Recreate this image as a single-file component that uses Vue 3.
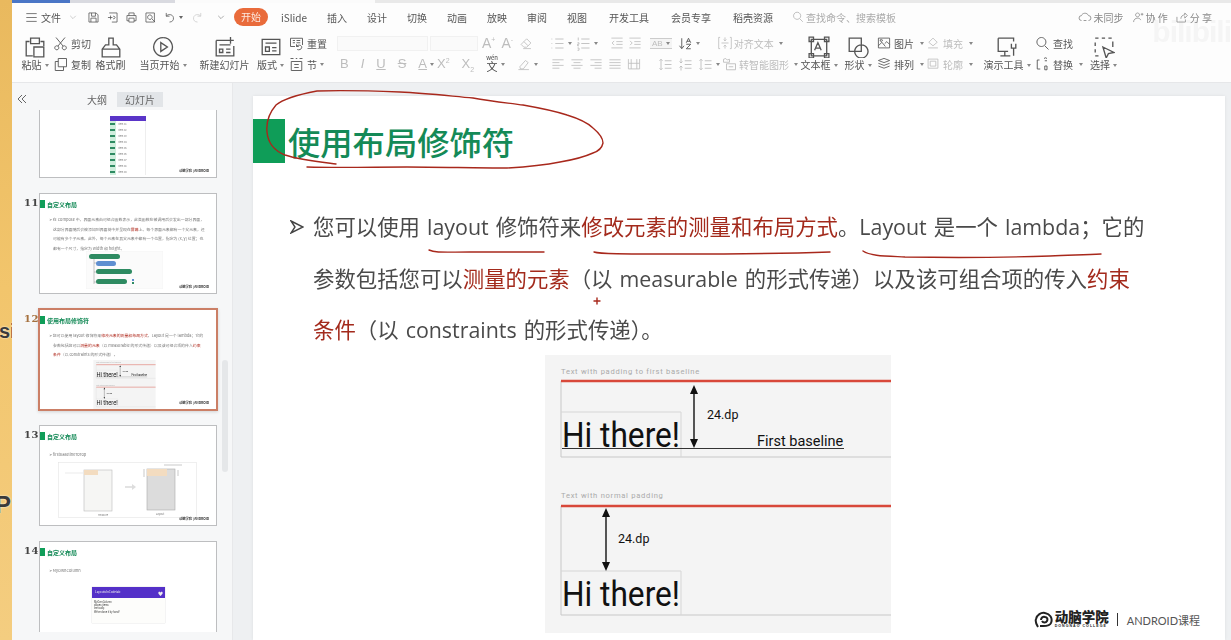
<template>
  <div class="page">
    <div class="strip">
      <span class="strip-si">si</span>
      <span class="strip-p">P</span>
    </div>

    <div class="main">
      <div class="topline">
        <i class="t-blue"></i><i class="t-gray"></i><i class="t-white"></i><i class="t-rest"></i>
      </div>

      <header class="toolbar">
        <div class="menu">
          <Ic n="menu" :s="13" class="m-burger" />
          <span class="m-file">文件</span>
          <Ic n="chev" :s="8" class="m-chev" />
          <div class="quick">
            <Ic n="save" />
            <Ic n="saveas" />
            <Ic n="print" />
            <Ic n="preview" />
            <Ic n="undo" />
            <i class="caret"></i>
            <Ic n="redo" class="off" />
            <Ic n="chev" :s="8" class="q-more" />
          </div>
          <nav class="tabs">
            <span class="pill">开始</span>
            <span v-for="t in tabs" :key="t" :class="{ wide: t.length === 4 }">{{ t }}</span>
          </nav>
          <div class="search">
            <Ic n="search" :s="12" />
            <span>查找命令、搜索模板</span>
          </div>
          <div class="m-right">
            <span class="act"><Ic n="cloud" :s="14" />未同步</span>
            <span class="act"><Ic n="user" :s="13" />协 作</span>
            <span class="act"><Ic n="share" :s="13" />分 享</span>
            <span class="bili">bilibili</span>
          </div>
        </div>

        <div class="ribbon">
          <div class="big w-paste"><Ic n="paste" :s="22" /><span class="lbl caret-r">粘贴</span></div>
          <div class="col w-cut">
            <span class="it"><Ic n="cut" :s="15" />剪切</span>
            <span class="it"><Ic n="copy" :s="15" />复制</span>
          </div>
          <div class="big w-brush"><Ic n="brush" :s="22" /><span class="lbl">格式刷</span></div>
          <div class="big w-play"><Ic n="play" :s="22" /><span class="lbl caret-r">当页开始</span></div>
          <div class="big w-new"><Ic n="newslide" :s="22" /><span class="lbl">新建幻灯片</span></div>
          <div class="big w-layout"><Ic n="layout" :s="22" /><span class="lbl caret-r">版式</span></div>
          <div class="col w-reset">
            <span class="it"><Ic n="reset" :s="15" />重置</span>
            <span class="it"><Ic n="section" :s="15" /><span class="caret-r">节</span></span>
          </div>

          <div class="col w-font off">
            <div class="it fontboxes"><i class="fbox f1"></i><i class="fbox f2"></i>
              <span class="sym s-ap">A<sup>+</sup></span><span class="sym s-am">A<sup>-</sup></span>
              <Ic n="eraser" :s="14" class="s-er" />
            </div>
            <div class="it fontstyle">
              <b class="sym">B</b><em class="sym">I</em><u class="sym">U</u><s class="sym">S</s>
              <u class="sym caret-r">A</u>
              <span class="sym s-x">X<sup>2</sup></span><span class="sym">X<sub>2</sub></span>
              <span class="wen caret-r"><ruby>文<rt>wén</rt></ruby></span>
              <span class="caret-r"><Ic n="marker" :s="14" /></span>
            </div>
          </div>

          <div class="col w-para off">
            <div class="it para">
              <span class="caret-r"><Ic n="bullets" :s="15" /></span>
              <span class="caret-r"><Ic n="numbers" :s="15" /></span>
              <Ic n="outdent" :s="14" class="p-ind" />
              <Ic n="indent" :s="14" />
              <span class="ab caret-r">AB</span>
              <span class="caret-r sortdark"><Ic n="sort" :s="15" /></span>
              <span class="p-txt caret-r"><Ic n="valign" :s="14" />对齐文本</span>
            </div>
            <div class="it para para2">
              <Ic n="left" :s="14" />
              <Ic n="center" :s="14" />
              <Ic n="right" :s="14" />
              <Ic n="justify" :s="14" />
              <Ic n="dist" :s="14" />
              <Ic n="lspace" :s="15" class="p-ls" />
              <Ic n="lspace2" :s="15" />
              <span class="caret-r"><Ic n="lspace" :s="15" /></span>
              <span class="p-txt2 caret-r"><Ic n="smart" :s="15" />转智能图形</span>
            </div>
          </div>

          <div class="big w-box"><Ic n="textbox" :s="22" /><span class="lbl caret-r">文本框</span></div>
          <div class="big w-shape"><Ic n="shape" :s="22" /><span class="lbl caret-r">形状</span></div>
          <div class="col w-pic">
            <span class="it caret-r"><Ic n="image" :s="14" />图片</span>
            <span class="it caret-r"><Ic n="layers" :s="14" />排列</span>
          </div>
          <div class="col w-fill off">
            <span class="it caret-r"><Ic n="fill" :s="14" />填充</span>
            <span class="it caret-r"><Ic n="outline" :s="14" />轮廓</span>
          </div>
          <div class="big w-tool"><Ic n="tool" :s="22" /><span class="lbl caret-r">演示工具</span></div>
          <div class="col w-find">
            <span class="it"><Ic n="search" :s="15" />查找</span>
            <span class="it caret-r"><Ic n="replace" :s="15" />替换</span>
          </div>
          <div class="big w-sel"><Ic n="select" :s="22" /><span class="lbl caret-r">选择</span></div>
        </div>
      </header>

      <div class="work">
        <aside class="panel">
          <div class="ptabs">
            <svg class="collapse" viewBox="0 0 10 10" width="10" height="10"><path d="M5 1L1 5l4 4M9 1L5 5l4 4" /></svg>
            <span class="ptab">大纲</span>
            <span class="ptab on">幻灯片</span>
          </div>
          <div class="thumbs">
            <div class="th-row first">
              <span class="num"></span>
              <div class="th">
                <div class="mini-list">
                  <div class="ml-head"></div>
                  <div v-for="n in 9" :key="n" class="ml-row"><i></i>Item {{ n + 90 }}</div>
                </div>
                <div class="th-logo">动脑学院 | ANDROID</div>
              </div>
            </div>

            <div class="th-row">
              <span class="num">11</span>
              <div class="th">
                <div class="th-title"><i></i>自定义布局</div>
                <p class="th-text">➢ 在 Compose 中，界面元素由可组合函数表示，此类函数在被调用后会发出一部分界面，</p>
                <p class="th-text in">这部分界面随后会被添加到界面树中并呈现在<span class="red">屏幕</span>上。每个界面元素都有一个父元素，还</p>
                <p class="th-text in">可能有多个子元素。此外，每个元素在其父元素中都有一个位置，指定为 (x, y) 位置；也</p>
                <p class="th-text in">都有一个尺寸，指定为 width 和 height。</p>
                <svg class="tree" viewBox="0 0 77 38">
                  <rect x="0" y="0" width="77" height="38" fill="#fbfbfb" stroke="#eee" stroke-width=".5" />
                  <path d="M8 7v26M8 12h4M8 21h4M8 31h4" stroke="#888" stroke-width=".5" fill="none" />
                  <rect x="3" y="3" width="31" height="5" rx="2.5" fill="#2e8b62" />
                  <rect x="10" y="10" width="20" height="5" rx="2.5" fill="#5f8fd0" />
                  <rect x="10" y="18" width="36" height="5" rx="2.5" fill="#2e8b62" />
                  <rect x="10" y="28" width="31" height="5" rx="2.5" fill="#2e8b62" />
                  <rect x="46" y="28" width="2" height="2" fill="#5f8fd0" />
                  <rect x="46" y="31" width="2" height="2" fill="#2e8b62" />
                </svg>
                <div class="th-logo">动脑学院 | ANDROID</div>
              </div>
            </div>

            <div class="th-row cur">
              <span class="num">12</span>
              <div class="th">
                <div class="th-title"><i></i>使用布局修饰符</div>
                <p class="th-text">➢ 您可以使用 layout 修饰符来<span class="red">修改元素的测量和布局方式</span>。Layout 是一个 lambda；它的</p>
                <p class="th-text in">参数包括您可以<span class="red">测量的元素</span>（以 measurable 的形式传递）以及该可组合项的传入<span class="red">约束</span></p>
                <p class="th-text in"><span class="red">条件</span>（以 constraints 的形式传递）。</p>
                <svg class="th-hi" width="63" height="50"><use href="#hi-diagram" /></svg>
                <div class="th-logo">动脑学院 | ANDROID</div>
              </div>
            </div>

            <div class="th-row">
              <span class="num">13</span>
              <div class="th">
                <div class="th-title"><i></i>自定义布局</div>
                <p class="th-text tall">➢ firstBaselineToTop</p>
                <svg class="phones" viewBox="0 0 139 56">
                  <rect x=".5" y=".5" width="138" height="55" fill="#fff" stroke="#e4e4e4" stroke-width=".6" />
                  <rect x="26" y="8" width="28" height="41" fill="#f6f6f4" stroke="#bbb" stroke-width=".6" />
                  <rect x="26" y="8" width="14" height="5" fill="#f3dcc0" />
                  <path d="M7 11h18" stroke="#ccc" stroke-width=".4" />
                  <path d="M67 25h9" stroke="#ddd" stroke-width="1.6" />
                  <path d="M74 22l4 3-4 3z" fill="#ddd" />
                  <rect x="89" y="7" width="28" height="41" fill="#dcdcdc" stroke="#aaa" stroke-width=".6" />
                  <rect x="89" y="7" width="20" height="7" fill="#f3dcc0" />
                  <path d="M86 7v8M106 3h18M120 8v6" stroke="#777" stroke-width=".4" />
                  <text x="45" y="54" class="t4">Measure</text>
                  <text x="102" y="53" class="t4">Layout</text>
                </svg>
                <div class="th-logo">动脑学院 | ANDROID</div>
              </div>
            </div>

            <div class="th-row">
              <span class="num">14</span>
              <div class="th">
                <div class="th-title"><i></i>自定义布局</div>
                <p class="th-text tall">➢ MyOwnColumn</p>
                <div class="card">
                  <div class="card-head">LayoutsInCodelab<i>♥</i></div>
                  <div class="card-body">MyOwnColumn<br />places items<br />vertically.<br />We've done it by hand!</div>
                </div>
              </div>
            </div>
          </div>
          <div class="scroll"></div>
        </aside>

        <section class="stage">
          <div class="slide">
            <div class="title"><i class="mark"></i><h1>使用布局修饰符</h1></div>
            <div class="body">
              <svg class="bullet" viewBox="0 0 14 14" width="14" height="14"><path d="M1 1l12 6-12 6 4-6z" /></svg>
              <p>您可以使用 layout 修饰符来<span class="red">修改元素的测量和布局方式</span>。Layout 是一个 lambda；它的</p>
              <p>参数包括您可以<span class="red">测量的元素</span>（以 measurable 的形式传递）以及该可组合项的传入<span class="red">约束</span></p>
              <p><span class="red">条件</span>（以 constraints 的形式传递）。</p>
            </div>
            <div class="lower">
              <svg width="346" height="278" class="hi">
                <symbol id="hi-diagram" viewBox="0 0 346 278">
                  <rect width="346" height="278" fill="#f4f4f4" />
                  <text x="16" y="19" font-family="Roboto, sans-serif" font-size="7.6" letter-spacing=".72" fill="#aaa">Text with padding to first baseline</text>
                  <path d="M16 102V26M16 102H346" fill="none" stroke="#c8c8c8" stroke-width="1" />
                  <path d="M16 57H136V102" fill="none" stroke="#d6d6d6" stroke-width="1" />
                  <path d="M16 26H346" stroke="#d8483a" stroke-width="2.4" />
                  <text x="17" y="92" font-family="Roboto, sans-serif" font-size="35.5" fill="#111" textLength="118" lengthAdjust="spacingAndGlyphs">Hi there!</text>
                  <path d="M17 93.5H299" stroke="#333" stroke-width="1" />
                  <path d="M149 34V90" stroke="#111" stroke-width="1.4" />
                  <path d="M149 30l-4 9h8zM149 93l-4-9h8z" fill="#111" />
                  <text x="162" y="64" font-family="Roboto, sans-serif" font-size="12.5" fill="#111">24.dp</text>
                  <text x="212" y="91" font-family="Roboto, sans-serif" font-size="14.5" fill="#111">First baseline</text>
                  <text x="16" y="143" font-family="Roboto, sans-serif" font-size="7.6" letter-spacing=".72" fill="#aaa">Text with normal padding</text>
                  <path d="M16 260V151M16 260H346" fill="none" stroke="#c8c8c8" stroke-width="1" />
                  <path d="M16 216H136V260" fill="none" stroke="#d6d6d6" stroke-width="1" />
                  <path d="M16 151H346" stroke="#d8483a" stroke-width="2.4" />
                  <text x="17" y="251" font-family="Roboto, sans-serif" font-size="35.5" fill="#111" textLength="118" lengthAdjust="spacingAndGlyphs">Hi there!</text>
                  <path d="M61 158V213" stroke="#111" stroke-width="1.4" />
                  <path d="M61 153l-4 9h8zM61 216l-4-9h8z" fill="#111" />
                  <text x="73" y="188" font-family="Roboto, sans-serif" font-size="12.5" fill="#111">24.dp</text>
                </symbol>
                <use href="#hi-diagram" />
              </svg>
              <div class="logo">
                <svg viewBox="0 0 20 20" width="20" height="20" class="logo-mark"><path d="M4 17c-2-3-3-5-2-8 1-4 5-7 9-6 5 1 8 5 6 10-1 3-5 3-8 3H6M7 10c0-2 2-4 4-3 2 0 3 2 2 4s-4 2-5 0" /></svg>
                <div class="logo-name"><b>动脑学院</b><small>DONGNAO COLLEGE</small></div>
                <i class="logo-bar"></i>
                <span class="logo-course">ANDROID课程</span>
              </div>
            </div>

            <!-- pen marks drawn over the slide, page coordinates -->
            <svg class="ink" viewBox="253 96 972 544">
              <path d="M336 164C320 162 300 160 285 155C275 151 268 143 267 132C266 122 270 112 276 105C283 99 296 95 317 91C345 90 375 91 400 92C425 93 450 96 473 98C490 101 507 103 523 105C540 108 555 111 567 115C580 119 588 123 593 128C599 133 603 138 603 143C602 148 599 151 593 153C582 158 572 160 560 162C545 165 525 167 507 168C475 168 440 167 407 167C375 167 340 168 307 167" />
              <path d="M429 250C435 253 445 252 470 252L544 252" />
              <path d="M594 252C600 254 620 254 680 254C740 254 800 253 830 252" />
              <path d="M863 251C870 256 885 256 905 257C960 258 1020 257 1050 256C1070 255 1085 255 1101 254" />
              <path d="M594 301h6M597 298v6" />
            </svg>
          </div>
        </section>
      </div>
    </div>
  </div>
</template>

<script setup>
import { h } from 'vue'

const tabs = ['iSlide', '插入', '设计', '切换', '动画', '放映', '审阅', '视图', '开发工具', '会员专享', '稻壳资源']

const icons = {
  menu: 'M2 4h16M2 10h16M2 16h16',
  chev: 'M3 7l7 7 7-7',
  save: 'M3 3h11l3 3v11H3zM7 3v5h6V3M6 17v-6h8v6',
  saveas: 'M5 3h12v14H9M3 10h7M7 7v6M11 8c2 0 3 1 3 2s-1 2-3 2',
  print: 'M6 7V3h8v4M3 7h14v8h-3M6 15H3V7M6 11h8v6H6z',
  preview: 'M3 3h13v14H3zM9 6a3.5 3.5 0 1 0 .1 0M12 12l5 5',
  undo: 'M5 3v5h5M5 8c3-4 10-3 11 2 1 4-2 7-6 7',
  redo: 'M15 3v5h-5M15 8c-3-4-10-3-11 2-1 4 2 7 6 7',
  search: 'M8.5 2a6 6 0 1 0 .1 0M13 13l5 5',
  cloud: 'M5 15a3.5 3.5 0 0 1 0-7c1-4 8-5 10 0a3.5 3.5 0 0 1 0 7M8 15h4',
  user: 'M10 3a3 3 0 1 0 .1 0M4 17c0-4 3-6 6-6s4 1 5 3M15 5h4M17 3v4',
  share: 'M3 9v8h13v-4M9 12c0-4 3-6 6-6V3l4 4-4 4V8',
  paste: 'M5 5H2v13h6M15 5h3v4M6 2h8v5H6zM9 10h9v9H9z',
  cut: 'M5 13a2.7 2.7 0 1 0 .1 0M15 13a2.7 2.7 0 1 0 .1 0M6.5 13.5L16 2M13.5 13.5L4 2',
  copy: 'M7 2h11v11H7zM7 6H3v12h11v-5',
  brush: 'M8 2h4v6h3l3 4v7H2v-7l3-4h3zM2 12h16',
  play: 'M10 1.5a8.5 8.5 0 1 0 .1 0M8 6l6 4-6 4z',
  newslide: 'M2 4h11M2 4v14h16V9M15 1v6M12 4h6M5 8h10M5 12h3v3H5zM11 12h4M11 15h4',
  layout: 'M2 3h16v14H2zM5 6.5h10M5 10h3.5v4H5zM11 10.5h4M11 13.5h4',
  reset: 'M2 3h16v9M2 3v11h6M5 6h3M10 6h5M5 9h3M10 9h5M10 14c2-3 7-2 7 1s-4 4-6 3M10 11v3h3',
  section: 'M2 2h4M9 2h2M14 2h4M3 6h14v12H3zM7 10h6M7 14h6',
  eraser: 'M3 12l8-8 6 6-6 6H7zM7 8l6 6M6 18h11',
  marker: 'M4 14l8-9 4 3-7 9H5zM2 18h15',
  bullets: 'M2 4h1M2 10h1M2 16h1M7 4h11M7 10h11M7 16h11',
  numbers: 'M3 2v4M2 9h2v2H2v2h2M2 16h2v3H2M7 4h11M7 10h11M7 16h11',
  outdent: 'M2 3h16M9 8h9M9 12h9M2 17h16M6 7l-3 3 3 3',
  indent: 'M2 3h16M9 8h9M9 12h9M2 17h16M3 7l3 3-3 3',
  sort: 'M5 3v13M2 13l3 4 3-4M11 9l3-6 3 6M12 7h4M11 11h6l-6 6h6',
  valign: 'M3 2H1v16h2M17 2h2v16h-2M5 10h10M10 2v5M8 5l2 2 2-2M10 18v-5M8 15l2-2 2 2',
  left: 'M2 4h16M2 8h10M2 12h16M2 16h10',
  center: 'M2 4h16M5 8h10M2 12h16M5 16h10',
  right: 'M2 4h16M8 8h10M2 12h16M8 16h10',
  justify: 'M2 4h16M2 8h16M2 12h16M2 16h16',
  dist: 'M2 3v14h16V3M6 3v14M14 3v14M2 9h16',
  lspace: 'M4 3v14M2 5l2-2 2 2M2 15l2 2 2-2M9 5h9M9 10h9M9 15h9',
  lspace2: 'M4 2v6M2 6l2 2 2-2M4 12v6M2 14l2-2 2 2M9 5h9M9 10h9M9 15h9',
  smart: 'M2 3l3-1 2 2 3-1v4H2zM6 9h12v8H6zM9 13h6',
  textbox: 'M3 3h14v15H3zM1 1h4v4H1zM15 1h4v4h-4zM1 16h4v4H1zM15 16h4v4h-4zM6 13l3-7 3 7M7 11h4',
  shape: 'M2 2h11v12H2zM13 8a6 6 0 1 0 .1 0',
  image: 'M2 3h16v14H2zM2 14l5-5 5 6M11 11l3-3 4 4M6 5a1.5 1.5 0 1 0 .1 0',
  layers: 'M10 2l8 3-8 3-8-3zM2 9l8 3 8-3M2 13l8 3 8-3',
  fill: 'M10 3l6 6-6 5-6-5zM3 17h14',
  outline: 'M3 3h14v13H3zM6 6h8v7H6z',
  tool: 'M2 2h14v3M2 2v12h9M8 14v4M4 18h9M14 7v4h4V7M16 11v7',
  replace: 'M3 4v12h4M3 4h3M12 2l2-1 2 1M13 5h3M13 12h3v5h-3z',
  select: 'M2 2h3M8 2h3M14 2h3M2 6v3M2 12v3M2 18h3M18 5v5M9 10l10 5-5 1-2 4z'
}

// small inline icon, stroke comes from the surrounding text colour
const Ic = (props) => h('svg', {
  class: 'i',
  viewBox: '0 0 20 20',
  width: props.s || 13,
  height: props.s || 13
}, [h('path', { d: icons[props.n] })])
Ic.props = ['n', 's']
</script>

<style>
html, body {
  margin: 0;
  background: #f0f2f4;
}
</style>

<style scoped>
.page {
  display: flex;
  width: 1231px;
  height: 640px;
  overflow: hidden;
  font-family: "Noto Sans CJK SC", "Noto Sans", sans-serif;
  color: #555;
}

.strip {
  width: 12px;
  flex: none;
  overflow: hidden;
  background: linear-gradient(#e9b95e, #f2c56c 45%, #f4cd80);
  font-family: "Liberation Sans", sans-serif;
  font-weight: 700;
  color: #3a3a3a;
  text-shadow: 0 0 2px #fff;
}
.strip-si {
  display: block;
  margin-top: 320px;
  font-size: 20px;
  line-height: 22px;
  margin-left: -1px;
}
.strip-p {
  display: block;
  margin-top: 150px;
  margin-left: -5px;
  font-size: 24px;
  line-height: 26px;
}

.main {
  flex: 1;
  min-width: 0;
  display: flex;
  flex-direction: column;
}

.topline {
  display: flex;
  height: 3px;
  flex: none;
}
.topline i { display: block; }
.t-blue { width: 58px; background: #4a76c6; }
.t-gray { width: 105px; background: #d9dae0; }
.t-white { width: 200px; background: #fbfbfb; }
.t-rest { flex: 1; background: #e9e9e9; }

.toolbar {
  flex: none;
  height: 80px;
  background: #fdfdfd;
  border-bottom: 1px solid #e6e7e9;
  font-size: 10px;
  filter: blur(.45px);
  box-sizing: border-box;
}
.i {
  display: block;
  flex: none;
  fill: none;
  stroke: currentColor;
  stroke-width: 1.2;
}

.menu {
  display: flex;
  align-items: center;
  height: 28px;
  padding-left: 13px;
  position: relative;
}
.m-file { margin-left: 3px; width: 20px; }
.m-chev { margin-left: 8px; color: #999; }
.quick {
  display: flex;
  align-items: center;
  gap: 6px;
  margin-left: 10px;
  width: 147px;
  color: #555;
}
.q-more { margin-left: 7px; }
.quick .off { color: #ccc; margin-left: 2px; }
.caret {
  width: 0;
  height: 0;
  border: 2px solid transparent;
  border-top: 3px solid #666;
  margin: 2px 0 0 -3px;
}
.tabs {
  display: flex;
  align-items: center;
  gap: 20px;
  margin-left: -1px;
  padding-left: 1px;
}
.tabs .wide { margin-left: 2px; }
.pill {
  width: 34px;
  height: 18px;
  line-height: 18px;
  text-align: center;
  background: #e96b3b;
  color: #fde8df;
  border-radius: 9px;
  margin-right: -7px;
}
.search {
  display: flex;
  align-items: center;
  gap: 2px;
  margin-left: 19px;
  color: #aaa;
}
.m-right {
  display: flex;
  align-items: center;
  margin-left: auto;
  padding-right: 19px;
  gap: 7px;
  color: #888;
}
.act {
  display: flex;
  align-items: center;
  gap: 2px;
}
.bili {
  position: absolute;
  right: 0;
  top: 12px;
  font-family: "Liberation Sans", sans-serif;
  font-weight: 700;
  font-size: 30px;
  letter-spacing: -1px;
  color: #f5f5f5;
  z-index: -1;
}

.ribbon {
  display: flex;
  height: 51px;
  padding-left: 8px;
  color: #555;
}
.big {
  display: flex;
  flex-direction: column;
  align-items: center;
  flex: none;
}
.big .i { margin-top: 5px; height: 22px; }
.lbl {
  margin-top: 0;
  white-space: nowrap;
  line-height: 14px;
}
.col {
  display: flex;
  flex-direction: column;
  flex: none;
  gap: 3px;
  padding-top: 3px;
}
.it {
  display: flex;
  align-items: center;
  gap: 3px;
  height: 18px;
  white-space: nowrap;
}
.caret-r {
  display: inline-flex;
  align-items: center;
}
.caret-r::after {
  content: "";
  width: 0;
  height: 0;
  margin-left: 3px;
  border: 2px solid transparent;
  border-top: 3px solid #888;
  border-bottom: 0;
}
.off { color: #bdbdbd; }

.w-paste { width: 28px; margin-left: 1px; }
.w-cut { width: 37px; margin-left: 4px; }
.w-brush { width: 31px; margin-left: 5px; }
.w-play { width: 46px; margin-left: 14px; }
.w-new { width: 49px; margin-left: 14px; }
.w-layout { width: 27px; margin-left: 8px; }
.w-reset { width: 37px; margin-left: 5px; }
.w-font { width: 203px; margin-left: 11px; }
.w-para { width: 250px; margin-left: 10px; }
.w-box { width: 38px; margin-left: 0; }
.w-shape { width: 28px; margin-left: 6px; }
.w-pic { width: 44px; margin-left: 5px; }
.w-fill { width: 48px; margin-left: 5px; }
.w-tool { width: 46px; margin-left: 10px; }
.w-find { width: 42px; margin-left: 5px; }
.w-sel { width: 27px; margin-left: 13px; }

.fontboxes { gap: 2px; }
.fbox {
  display: block;
  height: 15px;
  background: #fafafa;
  border: 1px solid #f1f1f1;
  box-sizing: border-box;
}
.f1 { width: 91px; }
.f2 { width: 48px; }
.sym {
  font-family: "Liberation Sans", sans-serif;
  font-size: 14px;
  font-weight: 400;
  line-height: 14px;
}
.sym sup, .sym sub { font-size: 7px; line-height: 0; }
.s-ap { margin-left: 2px; }
.s-am { margin-left: 4px; }
.s-er { margin-left: 4px; }
.fontstyle { gap: 12px; padding-left: 3px; }
.fontstyle .sym { font-size: 13px; }
.fontstyle .s-x { margin-left: -9px; }
.wen { color: #444; font-size: 11px; }
.wen rt { font-size: 6px; line-height: 6px; }

.para { gap: 4px; }
.ab {
  font-family: "Liberation Sans", sans-serif;
  font-size: 8px;
  margin-left: 4px;
  padding: 0 2px;
  border-top: 1px solid #ccc;
  border-bottom: 1px solid #ccc;
  background: #f5f5f5;
}
.sortdark { color: #555; margin-left: 2px; }
.p-ind { margin-left: 8px; }
.p-txt {
  display: inline-flex;
  gap: 2px;
  margin-left: 14px;
}
.para2 { gap: 5px; padding-left: 1px; }
.p-ls { margin-left: 12px; }
.p-txt2 {
  display: inline-flex;
  gap: 2px;
  margin-left: -3px;
}

.work {
  flex: 1;
  min-height: 0;
  display: flex;
}

.panel {
  width: 221px;
  flex: none;
  background: #f6f7f8;
  border-right: 1px solid #e7e8ea;
  box-sizing: border-box;
  position: relative;
  filter: blur(.25px);
}
.ptabs {
  display: flex;
  align-items: center;
  height: 27px;
  padding-top: 5px;
  box-sizing: border-box;
  font-size: 10px;
  color: #666;
}
.collapse {
  margin-left: 5px;
  fill: none;
  stroke: #666;
  stroke-width: 1;
}
.ptab {
  height: 15px;
  line-height: 15px;
  margin-left: 10px;
  padding: 0 8px;
}
.ptab:first-of-type { margin-left: 60px; padding: 0; }
.ptab.on { width: 46px; padding: 0; text-align: center; background: #e2e5e8; }

.thumbs {
  height: 522px;
  overflow: hidden;
}
.th-row {
  display: flex;
  margin-bottom: 15px;
  padding-left: 12px;
}
.th-row.first { margin-top: -33px; }
.num {
  width: 15px;
  flex: none;
  padding-top: 4px;
  font-family: "DejaVu Serif", serif;
  font-weight: 700;
  font-size: 10px;
  letter-spacing: .5px;
  color: #444;
}
.th {
  width: 178px;
  height: 101px;
  flex: none;
  background: #fff;
  border: 1px solid #bdbec0;
  box-sizing: border-box;
  overflow: hidden;
  position: relative;
  font-size: 3.9px;
  color: #777;
}
.th-row:last-child .th { height: 110px; border-bottom: 0; }
.cur .num { color: #a5713f; }
.cur .th {
  border: 2px solid #cb7f66;
  margin: -1px 0 -1px -1px;
  width: 180px;
  height: 103px;
  box-shadow: 0 1px 3px rgba(0,0,0,.15);
}
.th-title {
  display: flex;
  align-items: center;
  gap: 2px;
  margin-top: 5px;
  height: 10px;
  font-size: 6px;
  font-weight: 700;
  color: #148a57;
}
.th-title i {
  display: block;
  width: 5px;
  height: 8px;
  background: #0f9d58;
}
.th-text {
  margin: 0;
  padding-left: 9px;
  line-height: 9.5px;
  white-space: nowrap;
}
.th-text:first-of-type { margin-top: 6px; }
.th-text.in { padding-left: 13px; }
.th-text.tall { margin-top: 9px; }
.th .red { color: #b02a1e; }
.tree {
  display: block;
  width: 77px;
  height: 38px;
  margin: -2px 0 0 46px;
}
.th-hi {
  display: block;
  margin: 0 0 0 53px;
}
.phones {
  display: block;
  width: 139px;
  height: 56px;
  margin: 2px 0 0 18px;
}
.t4 {
  font-size: 2.6px;
  fill: #777;
  text-anchor: middle;
}
.th-logo {
  position: absolute;
  right: 7px;
  bottom: 4px;
  font-size: 3.2px;
  font-weight: 700;
  color: #333;
}
.mini-list {
  margin: 38px 0 0 70px;
  width: 36px;
  font-size: 2.5px;
}
.ml-head { height: 5px; background: #5a35c8; }
.ml-row {
  display: flex;
  align-items: center;
  gap: 3px;
  height: 6px;
  border-right: 1px solid #eee;
  background: linear-gradient(90deg, #cfeedd 6px, #fff 6px);
}
.ml-row i {
  display: block;
  width: 5px;
  height: 2px;
  background: #2e8b62;
}
.card {
  width: 73px;
  margin: 11px 0 0 52px;
  box-shadow: 0 0 1px #bbb;
  background: #fdfdfb;
}
.card-head {
  display: flex;
  justify-content: space-between;
  align-items: center;
  height: 11px;
  padding: 0 2px 0 3px;
  background: #5430c8;
  color: #eee;
  font-size: 3px;
}
.card-head i { font-style: normal; font-size: 5px; }
.card-body {
  padding: 3px 2px 9px;
  font-family: "Roboto", sans-serif;
  font-size: 2.6px;
  line-height: 3.4px;
  color: #444;
}
.scroll {
  position: absolute;
  right: 4px;
  top: 277px;
  width: 6px;
  height: 112px;
  border-radius: 3px;
  background: #e5e7e9;
}

.stage {
  flex: 1;
  min-width: 0;
  padding: 13px 6px 0 20px;
  background: #eef0f2;
}
.slide {
  position: relative;
  height: 544px;
  background: #fff;
  box-shadow: 0 0 3px rgba(0,0,0,.08);
}
.title {
  display: flex;
  align-items: center;
  padding-top: 23px;
  gap: 3px;
}
.mark {
  display: block;
  width: 32px;
  height: 44px;
  background: #0f9d58;
}
h1 {
  margin: 0;
  font-size: 32.3px;
  line-height: 44px;
  font-weight: 500;
  color: #148a57;
}
.body {
  position: relative;
  margin-top: 38px;
  padding-left: 60px;
  font-family: "Open Sans", "Noto Sans CJK SC", sans-serif;
  font-size: 21.4px;
  line-height: 51.5px;
  word-spacing: 1.5px;
  color: #4a4a4a;
  filter: blur(.3px);
}
.body p {
  margin: 0;
  white-space: nowrap;
}
.body .red { color: #a32a1c; }
.bullet {
  position: absolute;
  left: 37px;
  top: 19px;
  fill: none;
  stroke: #444;
  stroke-width: 1.4;
}
.lower {
  display: flex;
  padding-left: 292px;
  margin-top: -1px;
}
.hi { display: block; flex: none; }
.logo {
  display: flex;
  align-items: center;
  margin-left: auto;
  align-self: flex-end;
  margin-bottom: 0;
  padding-right: 25px;
  height: 26px;
  color: #222;
}
.logo-mark {
  fill: none;
  stroke: #222;
  stroke-width: 2;
}
.logo-name {
  display: flex;
  flex-direction: column;
  margin-left: 1px;
  line-height: 1;
}
.logo-name b { font-size: 13.5px; font-weight: 900; }
.logo-name small {
  font-family: "Liberation Sans", sans-serif;
  font-size: 3.6px;
  font-weight: 700;
  letter-spacing: 1px;
  margin-top: 1px;
}
.logo-bar {
  display: block;
  width: 1px;
  height: 13px;
  margin: 0 9px 0 8px;
  background: #333;
}
.logo-course {
  font-family: Lato, "Noto Sans CJK SC", sans-serif;
  font-size: 11px;
  color: #555;
}
.ink {
  position: absolute;
  inset: 0;
  width: 100%;
  height: 100%;
  overflow: visible;
  fill: none;
  stroke: #a8281c;
  stroke-width: 1.4;
  stroke-linecap: round;
  pointer-events: none;
}
</style>
